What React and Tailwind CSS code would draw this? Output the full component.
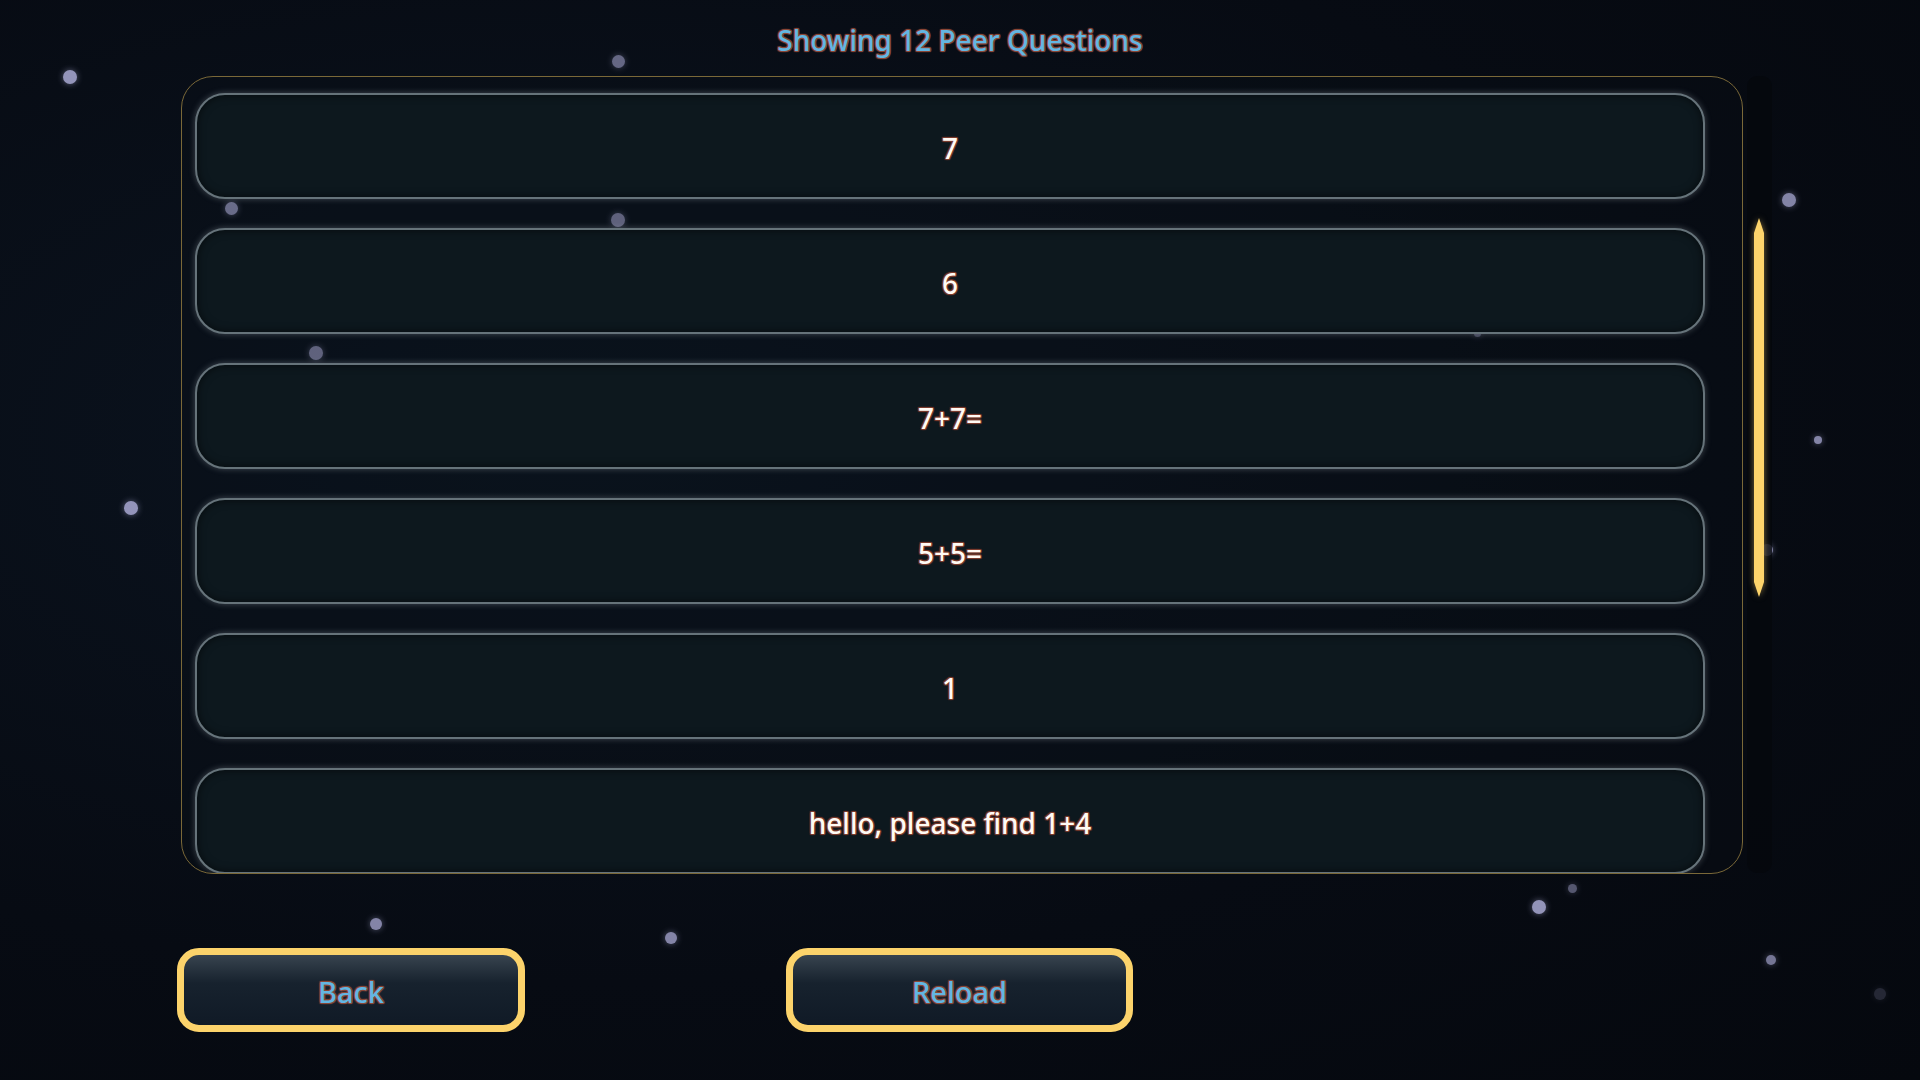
import React from "react";

const questions = ["7", "6", "7+7=", "5+5=", "1", "hello, please find 1+4"];

const stars = [
  { x: 70, y: 77, s: 14, o: "opacity-90" },
  { x: 618, y: 61, s: 13, o: "opacity-60" },
  { x: 231, y: 208, s: 13, o: "opacity-90" },
  { x: 618, y: 220, s: 14, o: "opacity-80" },
  { x: 316, y: 353, s: 14, o: "opacity-80" },
  { x: 1477, y: 333, s: 7, o: "opacity-50" },
  { x: 1789, y: 200, s: 14, o: "opacity-80" },
  { x: 1818, y: 440, s: 8, o: "opacity-80" },
  { x: 131, y: 508, s: 14, o: "opacity-90" },
  { x: 1767, y: 550, s: 12, o: "opacity-80" },
  { x: 376, y: 924, s: 12, o: "opacity-80" },
  { x: 671, y: 938, s: 12, o: "opacity-80" },
  { x: 1539, y: 907, s: 14, o: "opacity-90" },
  { x: 1572, y: 888, s: 9, o: "opacity-50" },
  { x: 1771, y: 960, s: 10, o: "opacity-70" },
  { x: 1880, y: 994, s: 12, o: "opacity-20" },
];

const blueText =
  "text-[#63b6e2] [text-shadow:1px_0_0_#8a4636,-1px_0_0_#8a4636,0_1px_0_#8a4636,0_-1px_0_#8a4636,1px_1px_1px_#8a4636,-1px_-1px_1px_#8a4636,1px_-1px_1px_#8a4636,-1px_1px_1px_#8a4636]";
const whiteText =
  "text-[#fffaf4] [text-shadow:1px_0_0_#7a3a2c,-1px_0_0_#7a3a2c,0_1px_0_#7a3a2c,0_-1px_0_#7a3a2c,1px_1px_1px_#7a3a2c,-1px_-1px_1px_#7a3a2c,1px_-1px_1px_#7a3a2c,-1px_1px_1px_#7a3a2c]";

function Star({ x, y, s, o }) {
  return (
    <div
      className={`absolute rounded-full bg-[#a3a3cc] shadow-[0_0_6px_rgba(163,163,204,0.6)] ${o}`}
      style={{ left: x - s / 2, top: y - s / 2, width: s, height: s }}
    />
  );
}

function QuestionCard({ text }) {
  return (
    <div className="shrink-0 h-[106px] rounded-[30px] border-2 border-[#66737a] bg-[#0d181e] shadow-[0_0_6px_rgba(170,180,190,0.35),inset_0_0_8px_rgba(0,0,0,0.6)] flex items-center justify-center">
      <span className={`pt-[4px] text-[28px] font-medium ${whiteText}`}>{text}</span>
    </div>
  );
}

function GoldButton({ label, className }) {
  return (
    <button
      className={`h-[84px] rounded-[22px] border-[7px] border-[#fcd36b] bg-gradient-to-b from-[#38444f] via-[#17222e] via-40% to-[#101a26] flex items-center justify-center ${className}`}
    >
      <span className={`pt-[3px] text-[29px] font-medium ${blueText}`}>{label}</span>
    </button>
  );
}

export default function App() {
  return (
    <div className="relative w-[1920px] h-[1080px] overflow-hidden bg-[#070b13] bg-[radial-gradient(ellipse_at_30%_40%,#0b1420_0%,#070b13_60%,#05080e_100%)] font-['Noto_Sans',sans-serif]">
      {/* background stars */}
      {stars.map((s, i) => (
        <Star key={i} {...s} />
      ))}

      <div className="relative flex flex-col">
        <div className="h-[76px] pt-[22px] flex justify-center">
          <h1 className={`leading-[36px] text-[28px] font-medium ${blueText}`}>
            Showing 12 Peer Questions
          </h1>
        </div>

        {/* list + scrollbar */}
        <div className="flex ml-[181px] gap-[4px]">
          <div className="w-[1562px] h-[798px] rounded-[32px] border-[1.5px] border-[#7a6838] bg-[#0a0f17]/30 overflow-hidden">
            <div className="flex flex-col gap-[29px] pt-[16px] pl-[13px] pr-[37px]">
              {questions.map((q, i) => (
                <QuestionCard key={i} text={q} />
              ))}
            </div>
          </div>
          <div className="relative w-[25px] h-[797px] rounded-[10px] bg-[#05080d]/80">
            <svg
              className="absolute left-[7px] top-[142px] drop-shadow-[0_0_3px_rgba(253,212,107,0.5)]"
              width="10"
              height="379"
              viewBox="0 0 10 379"
            >
              <polygon points="5,0 10,15 10,364 5,379 0,364 0,15" fill="#fdd46b" />
            </svg>
          </div>
        </div>

        {/* buttons */}
        <div className="flex mt-[74px] ml-[177px] gap-[261px]">
          <GoldButton label="Back" className="w-[348px]" />
          <GoldButton label="Reload" className="w-[347px]" />
        </div>
      </div>
    </div>
  );
}
